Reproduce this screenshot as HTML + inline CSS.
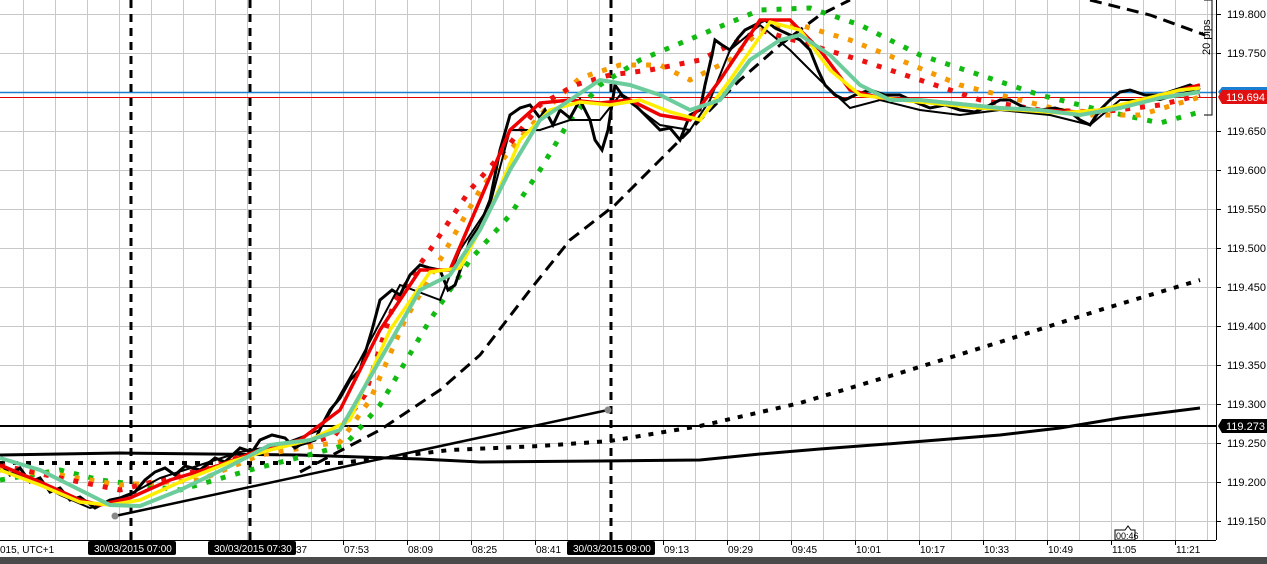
<!DOCTYPE html>
<html><head><meta charset="utf-8"><style>
html,body{margin:0;padding:0;background:#fff;}
svg{display:block;font-family:"Liberation Sans",sans-serif;}
</style></head><body>
<svg width="1267" height="564" viewBox="0 0 1267 564" xmlns="http://www.w3.org/2000/svg">
<rect width="1267" height="564" fill="#fff"/>
<g stroke="#c8c8c8" stroke-width="1">
<path d="M23.5 0V540M55.5 0V540M87.5 0V540M119.5 0V540M151.5 0V540M183.5 0V540M215.5 0V540M247.5 0V540M279.5 0V540M311.5 0V540M343.5 0V540M375.5 0V540M407.5 0V540M439.5 0V540M471.5 0V540M503.5 0V540M535.5 0V540M567.5 0V540M599.5 0V540M631.5 0V540M663.5 0V540M695.5 0V540M727.5 0V540M759.5 0V540M791.5 0V540M823.5 0V540M855.5 0V540M887.5 0V540M919.5 0V540M951.5 0V540M983.5 0V540M1015.5 0V540M1047.5 0V540M1079.5 0V540M1111.5 0V540M1143.5 0V540M1175.5 0V540M1207.5 0V540"/>
<path d="M0 14.5H1216M0 53.5H1216M0 92.5H1216M0 131.5H1216M0 170.5H1216M0 209.5H1216M0 248.5H1216M0 287.5H1216M0 326.5H1216M0 365.5H1216M0 404.5H1216M0 443.5H1216M0 482.5H1216M0 521.5H1216"/>
</g>
<line x1="0" y1="426" x2="1216" y2="426" stroke="#000" stroke-width="2"/>
<line x1="0" y1="92.5" x2="1216" y2="92.5" stroke="#1a7fd0" stroke-width="1.5"/>
<line x1="0" y1="97.5" x2="1216" y2="97.5" stroke="#d00" stroke-width="1"/>
<g stroke="#000" stroke-width="3" stroke-dasharray="8,6">
<line x1="131" y1="0" x2="131" y2="540"/><line x1="250" y1="0" x2="250" y2="540"/><line x1="611" y1="0" x2="611" y2="540"/>
</g>
<polyline fill="none" stroke="#000" stroke-width="3" points="0,455 120,453 300,455 420,459 480,462 600,461 700,460 760,454 820,449 900,443 1000,435 1060,428 1120,418 1200,408"/>
<polyline fill="none" stroke="#000" stroke-width="4" stroke-dasharray="5,8" points="0,463 200,463 340,463 450,450 540,446 610,441 700,426 800,403 900,373 1000,342 1100,310 1200,280"/>
<polyline fill="none" stroke="#000" stroke-width="3" stroke-dasharray="12,7" points="300,472 380,430 440,390 480,355 530,290 570,240 615,205 660,160 700,120 740,80 780,45 820,15 850,0"/>
<polyline fill="none" stroke="#000" stroke-width="3" stroke-dasharray="12,7" points="1090,0 1150,15 1205,35"/>
<line x1="115" y1="516" x2="608" y2="410" stroke="#000" stroke-width="2.5"/>
<circle cx="115" cy="516" r="3.5" fill="#888"/><circle cx="608" cy="410" r="3.5" fill="#888"/>
<polyline fill="none" stroke="#11bb11" stroke-width="5" stroke-dasharray="5,10" points="0,480 60,470 100,480 180,490 250,470 320,452 345,445 380,405 430,320 470,260 510,215 540,170 570,120 600,85 640,60 700,35 760,10 810,8 860,25 920,55 980,75 1040,95 1100,110 1160,123 1200,112"/>
<polyline fill="none" stroke="#f59a00" stroke-width="5" stroke-dasharray="5,10" points="0,470 60,475 120,485 200,480 260,455 320,445 340,442 370,400 405,320 440,260 480,190 510,150 545,110 580,78 620,65 660,65 690,80 730,60 760,30 800,25 850,40 900,60 960,85 1020,100 1080,115 1140,115 1200,97"/>
<polyline fill="none" stroke="#ee1111" stroke-width="5" stroke-dasharray="5,10" points="0,465 60,478 120,490 200,470 260,450 320,440 335,435 365,395 395,300 430,250 470,190 505,150 540,105 575,85 610,75 650,70 700,60 760,30 810,45 860,60 920,80 980,100 1040,110 1100,112 1160,105 1200,95"/>
<polyline fill="none" stroke="#000" stroke-width="3" points="0,462 10,475 20,468 30,482 40,478 50,492 60,488 70,500 80,497 95,508 110,500 120,498 135,492 145,480 155,472 165,468 175,475 185,466 200,470 215,458 225,462 240,448 252,452 260,440 272,435 285,438 295,448 300,445 315,440 322,425 330,410 340,398 350,380 360,370 372,330 380,300 392,290 400,295 410,275 420,265 430,268 440,270 448,290 455,285 462,265 470,240 480,225 490,200 500,150 510,115 520,108 530,105 540,118 545,110 553,125 560,110 570,118 580,100 590,120 595,140 602,150 608,130 615,85 622,95 630,100 640,110 650,120 660,130 670,128 680,140 690,115 700,110 705,85 712,55 715,40 722,45 730,50 738,38 745,30 755,25 765,20 775,28 790,35 800,40 810,50 818,70 825,85 835,95 845,100 855,95 870,90 885,95 900,95 915,102 930,108 945,105 960,110 975,112 990,105 1000,100 1010,100 1025,108 1040,110 1055,108 1070,112 1080,120 1090,125 1100,110 1110,100 1120,92 1130,90 1145,95 1160,95 1175,90 1190,85 1200,90"/>
<polyline fill="none" stroke="#000" stroke-width="2" points="0,470 30,478 60,495 90,508 120,500 160,478 200,465 240,452 280,445 320,430 360,360 400,285 440,300 460,250 490,205 510,130 540,130 570,120 600,120 620,95 660,125 690,130 710,100 730,50 760,25 790,50 820,80 850,108 880,100 920,110 960,115 1000,110 1050,115 1090,125 1120,100 1160,100 1200,88"/>
<polyline fill="none" stroke="#ee0000" stroke-width="3.5" points="0,465 40,482 80,500 100,505 130,498 170,480 220,465 260,450 300,440 340,410 380,330 420,270 450,270 480,200 510,130 540,103 570,100 600,103 630,100 660,115 690,120 720,80 760,20 790,20 820,50 850,90 880,98 920,100 960,104 1000,108 1040,110 1080,112 1120,108 1160,95 1200,85"/>
<polyline fill="none" stroke="#ffee00" stroke-width="3.5" points="0,470 40,485 80,502 110,505 140,500 180,482 230,462 270,450 310,440 350,420 390,330 430,272 460,268 490,210 520,140 550,110 580,102 610,105 640,100 670,112 700,120 730,80 770,22 800,30 830,70 860,95 900,100 940,104 980,108 1020,110 1060,113 1100,110 1140,100 1180,90 1200,88"/>
<polyline fill="none" stroke="#6ccc9c" stroke-width="4" points="0,458 40,470 80,490 110,505 140,506 180,490 230,466 270,445 310,440 340,430 380,360 420,290 450,275 480,230 510,170 540,120 570,100 600,80 630,85 660,95 690,110 720,100 750,60 780,40 800,35 830,55 860,85 890,100 920,100 960,104 1000,108 1040,110 1080,115 1120,108 1160,98 1200,92"/>
<polyline fill="none" stroke="#000" stroke-width="1" points="1204,0 1212,0 1212,115 1204,115"/>
<text transform="translate(1210,55) rotate(-90)" font-size="11" fill="#000">20 pips</text>
<line x1="1216.5" y1="0" x2="1216.5" y2="540" stroke="#000" stroke-width="1"/>
<g font-size="11" fill="#000">
<text x="1227" y="18">119.800</text><text x="1227" y="57">119.750</text><text x="1227" y="135">119.650</text><text x="1227" y="174">119.600</text><text x="1227" y="213">119.550</text><text x="1227" y="252">119.500</text><text x="1227" y="291">119.450</text><text x="1227" y="330">119.400</text><text x="1227" y="369">119.350</text><text x="1227" y="408">119.300</text><text x="1227" y="447">119.250</text><text x="1227" y="486">119.200</text><text x="1227" y="525">119.150</text>
</g>
<g stroke="#000"><path d="M1216 14.5h5M1216 53.5h5M1216 131.5h5M1216 170.5h5M1216 209.5h5M1216 248.5h5M1216 287.5h5M1216 326.5h5M1216 365.5h5M1216 404.5h5M1216 443.5h5M1216 482.5h5M1216 521.5h5"/></g>
<path d="M1222 87h45v10h-45l-4-5z" fill="#1a7fd0"/>
<path d="M1222 90h45v14h-45l-4-7z" fill="#e01010"/>
<text x="1226" y="101" font-size="11" fill="#fff">119.694</text>
<path d="M1222 419h45v14h-45l-4-7z" fill="#000"/>
<text x="1226" y="430" font-size="11" fill="#fff">119.273</text>
<line x1="0" y1="540.5" x2="1216" y2="540.5" stroke="#000"/>
<g stroke="#000"><path d="M343.5 540v5M407.5 540v5M471.5 540v5M535.5 540v5M663.5 540v5M727.5 540v5M791.5 540v5M855.5 540v5M919.5 540v5M983.5 540v5M1047.5 540v5M1111.5 540v5M1175.5 540v5"/></g>
<g font-size="10" fill="#000">
<text x="0" y="553">015, UTC+1</text>
<text x="344" y="553">07:53</text><text x="408" y="553">08:09</text><text x="472" y="553">08:25</text><text x="536" y="553">08:41</text>
<text x="664" y="553">09:13</text><text x="728" y="553">09:29</text><text x="792" y="553">09:45</text><text x="856" y="553">10:01</text><text x="920" y="553">10:17</text><text x="984" y="553">10:33</text><text x="1048" y="553">10:49</text><text x="1112" y="553">11:05</text><text x="1176" y="553">11:21</text>
<text x="296" y="553">37</text>
</g>
<rect x="88" y="541" width="88" height="14" rx="2" fill="#000"/><text x="94" y="552" font-size="10" fill="#fff">30/03/2015 07:00</text>
<rect x="208" y="541" width="88" height="14" rx="2" fill="#000"/><text x="214" y="552" font-size="10" fill="#fff">30/03/2015 07:30</text>
<rect x="567" y="541" width="88" height="14" rx="2" fill="#000"/><text x="573" y="552" font-size="10" fill="#fff">30/03/2015 09:00</text>
<path d="M1115 530h10l3-4 3 4h4v10h-20z" fill="#fff" stroke="#000"/>
<text x="1116" y="539" font-size="9" fill="#000">00:46</text>
<rect x="0" y="557" width="1267" height="7" fill="#4a4a4a"/>
</svg>
</body></html>
